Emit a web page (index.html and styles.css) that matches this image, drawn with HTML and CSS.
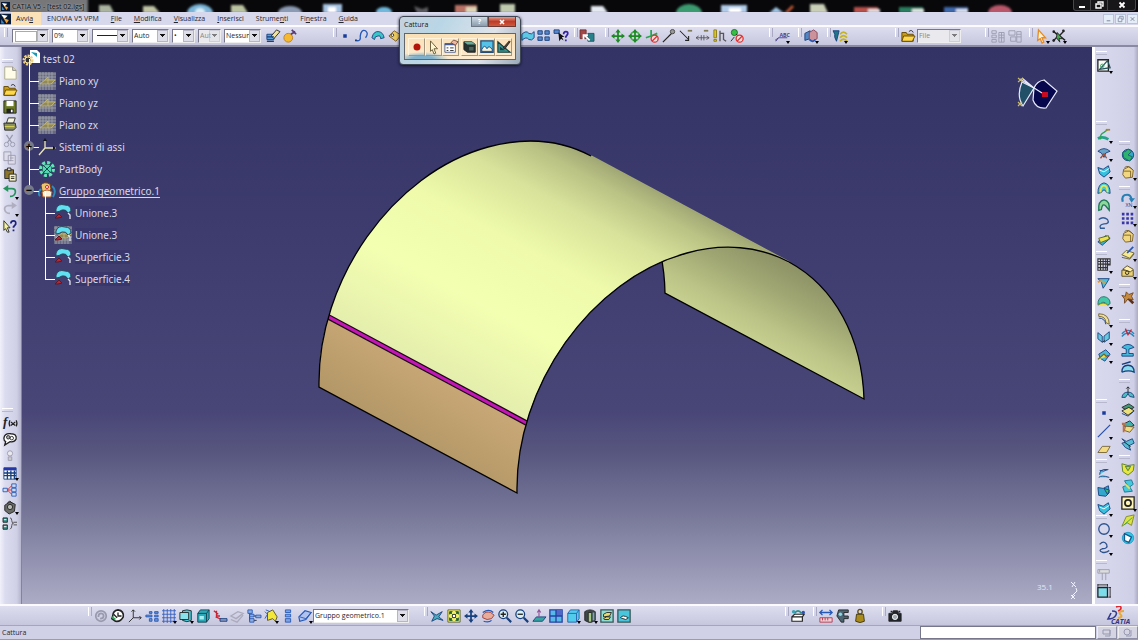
FILE: index.html
```html
<!DOCTYPE html>
<html lang="it">
<head>
<meta charset="utf-8">
<title>CATIA V5 - [test 02.igs]</title>
<link rel="stylesheet" href="styles.css">
</head>
<body>
<div class="app">
  <header class="titlebar">
    <svg class="titlebar-art" viewBox="0 0 1138 12" preserveAspectRatio="none" aria-hidden="true">
      <defs><filter id="soft"><feGaussianBlur stdDeviation="1"/></filter></defs>
      <g filter="url(#soft)">
        <rect x="-6" y="-2" width="94" height="18" fill="#77777a"/>
        <path d="M99 5h11l4 8h-15z" fill="#a9b39f"/><path d="M143 6h11l6 7h-17z" fill="#c0c3a4"/>
        <ellipse cx="200" cy="13" rx="13" ry="9" fill="#79b5d8"/><ellipse cx="200" cy="12" rx="5" ry="4" fill="#d8eef6"/>
        <path d="M231 5h12l5 8h-17z" fill="#b9c3a0"/><ellipse cx="290" cy="13" rx="12" ry="7" fill="#8c9bb4"/>
        <path d="M323 4h19v9h-19z" fill="#a5c3e2"/><path d="M328 7h8v6h-8z" fill="#fff"/>
        <ellipse cx="384" cy="12" rx="8" ry="5" fill="#6fb9dd"/><path d="M414 6l8 3 6-2v6h-11z" fill="#5c5c61"/>
        <path d="M455 5h22v8h-22z" fill="#b87164"/><path d="M466 7h11v6h-11z" fill="#ded5b7"/>
        <path d="M500 4h15v9h-15z" fill="#bdc8ad"/><path d="M591 6h12l5 7h-17z" fill="#e4e9f2"/>
        <ellipse cx="689" cy="13" rx="13" ry="9" fill="#3a9b70"/><path d="M721 5h26v8h-26z" fill="#b0cce8"/><path d="M729 8h12v5h-12z" fill="#fff"/>
        <path d="M769 13l7-6 8 6z" fill="#9dc6e5"/><path d="M784 13l8-8 2 2-6 6z" fill="#b95530"/>
        <path d="M810 4h14l4 9h-18z" fill="#c9ceb7"/><path d="M854 7h24v6h-24z" fill="#b84f48"/><path d="M868 9h12v4h-12z" fill="#e6dcdc"/>
        <path d="M899 7h24v6h-24z" fill="#2c7e61"/><path d="M912 9h12v4h-12z" fill="#dde8e2"/>
        <path d="M944 7h24v6h-24z" fill="#3c67ac"/><path d="M956 9h12v4h-12z" fill="#d8e0ee"/><ellipse cx="1000" cy="13" rx="12" ry="8" fill="#b9566b"/>
      </g>
    </svg>
    <svg class="app-icon" viewBox="0 0 10 10" aria-hidden="true"><use href="#catia-mark"/></svg>
    <h1 class="window-title">CATIA V5 - [test 02.igs]</h1>
    <div class="window-buttons">
      <button aria-label="Riduci a icona"><svg viewBox="0 0 10 8"><path d="M2 6h6" stroke="#fff" stroke-width="2"/></svg></button>
      <button aria-label="Ripristina"><svg viewBox="0 0 10 8"><path d="M4 2V1h5v4H8M2 3h5v4H2z" fill="none" stroke="#fff" stroke-width="1.4"/></svg></button>
      <button class="wide" aria-label="Chiudi"><svg viewBox="0 0 10 8"><path d="M2.500 1.500l5 5M7.500 1.500l-5 5" stroke="#fff" stroke-width="1.800"/></svg></button>
    </div>
  </header>

  <nav class="menubar">
    <svg class="app-icon" viewBox="0 0 10 10" aria-hidden="true"><use href="#catia-mark"/></svg>
    <button class="menu active">Avvi<u>a</u></button>
    <button class="menu">ENOVIA V5 VPM</button>
    <button class="menu"><u>F</u>ile</button>
    <button class="menu"><u>M</u>odifica</button>
    <button class="menu"><u>V</u>isualizza</button>
    <button class="menu"><u>I</u>nserisci</button>
    <button class="menu">Strume<u>n</u>ti</button>
    <button class="menu">Fi<u>n</u>estra</button>
    <button class="menu"><u>G</u>uida</button>
    <div class="document-buttons">
      <button aria-label="Riduci documento"><svg viewBox="0 0 10 8"><path d="M3 6h4" stroke="#777b90"/></svg></button>
      <button aria-label="Ripristina documento"><svg viewBox="0 0 10 8"><path d="M4 2.500V1h4v3.500H7M2.500 3h4v4h-4z" fill="none" stroke="#8a91a8"/></svg></button>
      <button aria-label="Chiudi documento"><svg viewBox="0 0 10 8"><path d="M3 2l4 4M7 2L3 6" stroke="#777b90"/></svg></button>
    </div>
  </nav>

  <div class="toolbar top-toolbar" role="toolbar" aria-label="Strumenti principali">
    <div class="group properties">
      <span class="combo swatch"><select aria-label="Colore"><option></option></select></span>
      <span class="combo"><select aria-label="Trasparenza"><option>0%</option></select></span>
      <span class="combo line"><select aria-label="Tipo di linea"><option></option></select></span>
      <span class="combo"><select aria-label="Spessore"><option>Auto</option></select></span>
      <span class="combo small"><select aria-label="Simbolo punto"><option>•</option></select></span>
      <span class="combo small off"><select aria-label="Rendering" disabled><option>Aut</option></select></span>
      <span class="combo"><select aria-label="Livello"><option>Nessuno</option></select></span>
      <span class="tools" data-tools="painter"></span>
    </div>
    <div class="group" data-tools="sketch"></div>
    <div class="group" data-tools="catalog"></div>
    <div class="group" data-tools="move"></div>
    <div class="group" data-tools="text"></div>
    <div class="group" data-tools="cube"></div>
    <div class="group" data-tools="filter"></div>
    <div class="group">
      <span class="tools" data-tools="folder"></span>
      <span class="combo file off"><select aria-label="Origine" disabled><option>File</option></select></span>
    </div>
    <div class="group" data-tools="tables"></div>
    <div class="group" data-tools="select"></div>
  </div>

  <main class="workspace">
    <div class="side left-side" role="toolbar" aria-label="Standard">
      <div class="group" data-tools="standard"></div>
      <div class="group" data-tools="knowledge"></div>
    </div>

    <section class="viewport" aria-label="Vista 3D">
      <svg class="scene" viewBox="22 47 1070 557" aria-label="Superficie cilindrica">
        <defs>
          <linearGradient id="outer" gradientUnits="userSpaceOnUse" x1="690" y1="209" x2="558" y2="456">
            <stop offset="0" stop-color="#a2a875"/><stop offset=".07" stop-color="#bac284"/><stop offset=".2" stop-color="#d8e29a"/><stop offset=".4" stop-color="#effbab"/><stop offset=".65" stop-color="#f3ffb1"/><stop offset="1" stop-color="#e2ebac"/>
          </linearGradient>
          <linearGradient id="inner" gradientUnits="userSpaceOnUse" x1="800" y1="266" x2="755" y2="350">
            <stop offset="0" stop-color="#8c9065"/><stop offset=".35" stop-color="#a0a773"/><stop offset=".7" stop-color="#bbc386"/><stop offset="1" stop-color="#cad492"/>
          </linearGradient>
          <linearGradient id="sand" gradientUnits="userSpaceOnUse" x1="440" y1="376" x2="400" y2="440">
            <stop offset="0" stop-color="#c7a775"/><stop offset="1" stop-color="#b39766"/>
          </linearGradient>
          <path id="shell" d="M319 387C317 280 393 173 488 147C525 137 561 140 591 156L789 262C759 246 723 243 687 253C591 279 515 386 517 493Z"/>
          <clipPath id="shell-clip"><use href="#shell"/></clipPath>
        </defs>
        <path d="M591 156C637 181 664 232 665 293L864 399C862 338 835 287 789 262Z" fill="url(#inner)"/>
        <path d="M591 156C637 181 664 232 665 293L864 399C862 338 835 287 789 262" fill="none" stroke="#000" stroke-width="1.300"/>
        <use href="#shell" fill="url(#outer)"/>
        <path d="M591 156L789 262" stroke="#a2a875" stroke-width="1.500"/>
        <g clip-path="url(#shell-clip)">
          <path d="M300 303L328 318L527 424L545 433V510H300Z" fill="url(#sand)"/>
          <path d="M310 307L545 433" stroke="#1c0718" stroke-width="5.500"/>
          <path d="M310 307L545 433" stroke="#c217b4" stroke-width="3"/>
        </g>
        <path d="M591 156C561 140 525 137 488 147C393 173 317 280 319 387L517 493C515 386 591 279 687 253C723 243 759 246 789 262" fill="none" stroke="#000" stroke-width="1.300"/>
        <g stroke="#e9ebfa" stroke-width="1.200">
          <path d="M1022 82Q1016 96 1023 106L1034 88Z" fill="#225069"/>
          <path d="M1034 88Q1037 81 1044 80L1057 91L1046 108Q1036 109 1033 100Z" fill="#07074d"/>
          <path d="M1020 79L1042 93M1022 78L1034 88" fill="none"/>
          <path d="M1018 78l5 4m0-4l-5 4M1018 102l4 4m0-4l-4 4" stroke="#c9bb6e"/>
        </g>
        <path d="M1042 92h6v5h-6z" fill="#c90a20"/>
        <path d="M1071 582l5 5m-1-5l-3 5M1076 588l1 3-5 5M1071 595l4 4m0-4l-4 4" fill="none" stroke="#f3f3ff"/>
        <text class="scale" x="1037" y="590">35.1</text>
      </svg>
      <ul class="tree">
        <li class="root"><span class="node"><svg class="part-icon" viewBox="0 0 18 18"><path d="M8 0h7l3 3v10H8z" fill="#fff"/><path d="M9 2l6 5V3z" fill="#179bb5"/><circle cx="6" cy="10" r="4" fill="none" stroke="#f1d27d" stroke-width="3" stroke-dasharray="2 1"/><circle cx="6" cy="10" r="3" fill="#333" stroke="#f6dfa0"/></svg><span class="label">test 02</span></span>
          <ul class="level">
            <li><span class="node" data-icon="plane"><span class="label">Piano xy</span></span></li>
            <li><span class="node" data-icon="plane"><span class="label">Piano yz</span></span></li>
            <li><span class="node" data-icon="plane"><span class="label">Piano zx</span></span></li>
            <li class="plus"><span class="node" data-icon="axes"><span class="label">Sistemi di assi</span></span></li>
            <li><span class="node" data-icon="body"><span class="label">PartBody</span></span></li>
            <li class="minus"><span class="node" data-icon="geoset"><span class="label current">Gruppo geometrico.1</span></span>
              <ul class="level sub">
                <li><span class="node" data-icon="surface"><span class="label">Unione.3</span></span></li>
                <li><span class="node" data-icon="hidden"><span class="label">Unione.3</span></span></li>
                <li><span class="node" data-icon="surface"><span class="label">Superficie.3</span></span></li>
                <li><span class="node" data-icon="surface"><span class="label">Superficie.4</span></span></li>
              </ul>
            </li>
          </ul>
        </li>
      </ul>
    </section>

    <div class="side right-side">
      <div class="column first" role="toolbar" aria-label="Superfici">
        <div class="group" data-tools="sketcher"></div>
        <div class="group" data-tools="surfaces"></div>
        <div class="group" data-tools="operations"></div>
        <div class="group" data-tools="wireframe"></div>
        <div class="group" data-tools="shapes"></div>
        <div class="group" data-tools="curves"></div>
        <div class="group" data-tools="constraints"></div>
      </div>
      <div class="column second" role="toolbar" aria-label="Analisi">
        <div class="group" data-tools="render"></div>
        <div class="group" data-tools="replicate"></div>
        <div class="group" data-tools="wand"></div>
        <div class="group" data-tools="analysis"></div>
        <div class="group" data-tools="advanced"></div>
        <div class="group" data-tools="volumes"></div>
      </div>
    </div>
  </main>

  <div class="toolbar bottom-toolbar" role="toolbar" aria-label="Vista">
    <div class="group inset">
      <span class="tools" data-tools="tools"></span>
      <span class="combo set"><select aria-label="Oggetto di lavoro"><option>Gruppo geometrico.1</option></select></span>
    </div>
    <div class="group" data-tools="view"></div>
    <div class="group" data-tools="update"></div>
    <div class="group" data-tools="measure"></div>
    <div class="group" data-tools="camera"></div>
    <svg class="brand" viewBox="0 0 34 19" role="img" aria-label="DS CATIA">
      <path d="M12 1q5-2 5 1q0 2-3 3" fill="none" stroke="#dc2630" stroke-width="1.600"/>
      <path d="M8 5q6 0 4 4q-2 4-8 4l3-6" fill="none" stroke="#343b8f" stroke-width="1.600"/>
      <path d="M20 5q-6 0-4 3q4 3-2 4" fill="none" stroke="#e6a832" stroke-width="2"/>
      <text class="brand-name" x="7" y="18">CATIA</text>
    </svg>
  </div>

  <footer class="statusbar">
    <span class="status">Cattura</span>
    <input class="command" type="text" aria-label="Comando">
    <button class="status-button" aria-label="Elenco comandi"><svg viewBox="0 0 14 10"><path d="M3 2h7v4H3zm7 0v6H5" fill="none" stroke="#9999b2"/></svg></button>
    <button class="status-button" aria-label="Messaggi"><svg viewBox="0 0 14 10"><circle cx="6" cy="4" r="3" fill="none" stroke="#9999b2"/><path d="M10 2v6H5" fill="none" stroke="#9999b2"/></svg></button>
  </footer>

  <section class="dialog" role="dialog" aria-labelledby="dialog-title">
    <div class="dialog-head">
      <h2 id="dialog-title">Cattura</h2>
      <button class="dialog-help" aria-label="Guida">?</button>
      <button class="dialog-close" aria-label="Chiudi"><svg viewBox="0 0 10 8"><path d="M3 2l4 4M7 2L3 6" stroke="#fff" stroke-width="1.600"/></svg></button>
    </div>
    <div class="dialog-body">
      <div class="tools" data-tools="record"></div>
      <div class="tools" data-tools="album"></div>
    </div>
  </section>
</div>
<svg class="sprite" aria-hidden="true"><symbol id="catia-mark" viewBox="0 0 10 10"><path d="M0 0h10v10H0z" fill="#061a3a"/><path d="M1 1l6 1-3 3z" fill="#fff"/><path d="M3 4l5 2-2 3z" fill="#f3a12d"/><path d="M1 5l3 4H1z" fill="#3789c4"/></symbol></svg>
<script src="app.js"></script>
</body>
</html>
```
FILE: styles.css
```css
* { box-sizing: border-box; }
body { margin: 0; font-family: "Open Sans", "Noto Sans", sans-serif; font-size: 7px; color: #26262e; }
button, select, input { font: inherit; color: inherit; margin: 0; padding: 0; border: 0; border-radius: 0; background: none; }
button { display: grid; place-items: center; }
ul { list-style: none; margin: 0; padding: 0; }
h1, h2 { margin: 0; font-size: 7px; font-weight: 400; }
svg { display: block; }
.sprite { position: absolute; width: 0; height: 0; }

.app { position: relative; display: flex; flex-direction: column; min-height: 100vh; overflow: hidden; background: #d1d1e8; }

.titlebar { position: relative; display: flex; align-items: center; height: 12px; background: #08080a; overflow: hidden; }
.titlebar-art { position: absolute; inset: 0; width: 100%; height: 100%; }
.app-icon { position: relative; width: 9px; height: 9px; margin: 0 2px 0 1px; flex: none; }
.window-title { position: relative; flex: 1; color: #111; text-shadow: 0 0 2px #ccc; }
.window-buttons { position: relative; display: flex; height: 11px; align-self: flex-start; margin-right: 2px; border: 1px solid #46464b; border-top: 0; border-radius: 0 0 3px 3px; background: #17171a; }
.window-buttons button { width: 17px; border-right: 1px solid #46464b; }
.window-buttons .wide { width: 27px; border-right: 0; }
.window-buttons svg { width: 10px; height: 8px; }

.menubar { display: flex; align-items: stretch; height: 13px; background: #d8d8ec; }
.menubar .app-icon { width: 11px; height: 12px; margin: 1px 0 0; }
.menu { display: block; padding: 0 6px; white-space: nowrap; }
.menu.active { padding: 0 8px 0 5px; background: #fae1b8; }
.menu u { text-underline-offset: 1px; }
.document-buttons { display: flex; gap: 1px; margin-left: auto; align-items: center; }
.document-buttons button { width: 11px; height: 10px; border: 1px solid #b7c4dc; background: #e4edf8; }
.document-buttons svg { width: 9px; height: 8px; }

.toolbar { display: grid; height: 22px; border-top: 2px solid #fbfbff; border-bottom: 2px solid #8a8aa2; background: linear-gradient(#dedef0, #c6c6de); }
.top-toolbar { grid-template-columns: 333px 241px 31px 164px 29px 29px 68px 90px 44px 1fr; padding-bottom: 1px; }
.bottom-toolbar { grid-template-columns: 424px 361px 28px 69px 1fr 34px; border-bottom-width: 1px; border-bottom-color: #a5a5bd; }
.bottom-toolbar .inset { padding-left: 92px; }
.group { position: relative; display: flex; align-items: center; padding-left: 4px; }
.group::before { content: ""; position: absolute; left: 0; top: 1px; width: 2px; height: 9px; border-left: 1px solid #fff; border-right: 1px solid #a9a9c3; }
.inset::before { left: 88px; }
.tools { display: flex; }
.tool { position: relative; width: 17px; height: 17px; flex: none; }
.tool svg { width: 14px; height: 14px; overflow: visible; }
.tool.more::after { content: ""; position: absolute; right: 0; bottom: 0; border: 2px solid transparent; border-top: 3px solid #000; border-bottom: 0; }
[data-tools="sketch"] .tool { width: 16px; }
[data-tools="sketch"] { justify-content: space-between; padding-right: 5px; }
.brand { width: 34px; height: 19px; }
.brand-name { font-family: "Open Sans", sans-serif; font-size: 7px; font-style: italic; font-weight: 700; fill: #35357e; }

.properties { gap: 3px; padding-left: 12px; }
.properties::before { left: 4px; }
.combo { position: relative; display: block; flex: none; width: 37px; height: 14px; border: 1px solid #77778c; border-right-color: #eee; border-bottom-color: #eee; background: #fff; }
.combo select { appearance: none; display: block; width: 100%; height: 100%; padding: 0 9px 0 1px; overflow: hidden; }
.combo::after { content: ""; position: absolute; top: 0; bottom: 0; right: 0; width: 9px; background: conic-gradient(from -45deg at 50% 100%, #111 90deg, transparent 0) center / 5px 3px no-repeat, #dedee8; border: 1px solid #b5b5c3; pointer-events: none; }
.combo.small { width: 23px; }
.combo.line::before { content: ""; position: absolute; left: 4px; top: 5px; width: 20px; border-top: 1px solid #222; }
.combo.swatch::before { content: ""; position: absolute; left: 2px; top: 1px; width: 20px; height: 9px; border: 1px solid #aaa; pointer-events: none; }
.combo.off { background: #e9e9ee; color: #888; }
.combo.off select { opacity: 1; }
.combo.off::after { opacity: .5; }
.combo.file { width: 44px; margin-left: 1px; }
.combo.set { width: 96px; }

.workspace { display: grid; grid-template-columns: 22px 1fr 46px; flex: 1; }
.side { background: linear-gradient(90deg, #f1f1fb 0, #dcdcf0 5px, #cfcfe6 80%, #b5b5ce); }
.left-side { display: grid; grid-template-rows: 349px 1fr; padding: 12px 2px 0 1px; border-right: 1px solid #8383a0; }
.side .group { flex-direction: column; align-items: center; padding: 5px 0 0; min-height: 0; }
.side .group::before { left: 1px; top: 0; width: 11px; height: 2px; border: 0; border-top: 1px solid #fff; border-bottom: 1px solid #b7b7cd; }
.right-side .more { height: 18px; }
.right-side { display: grid; grid-template-columns: 23px 20px; padding-top: 4px; border-left: 3px solid #fff; background: linear-gradient(90deg, #d9d9ee, #cfcfe7 90%, #aaaac4); }
.column { display: grid; align-content: start; }
.column.first { grid-template-rows: 70px 130px 148px 60px 56px 45px 38px; padding-right: 5px; }
.column.second { grid-template-rows: 45px 98px 35px 60px 76px 92px; padding-top: 90px; }

.viewport { position: relative; overflow: hidden; background: linear-gradient(#333366 0, #3d3b6e 30%, #484577 65%, #58577f 73%, #7e7e9f 86%, #acacc6 100%); }
.scene { width: 100%; height: 100%; }
.scale { font-size: 8px; fill: #e6e6f3; }
.tree { position: absolute; left: 0; top: 1px; color: #d8d8e6; font-family: "Noto Sans", sans-serif; font-size: 10px; }
.tree li { position: relative; }
.node { display: flex; align-items: center; gap: 3px; height: 22px; }
.node svg { width: 18px; height: 18px; flex: none; }
.label { white-space: nowrap; line-height: 14px; }
.current { text-decoration: underline; text-underline-offset: 2px; }
.level { padding-left: 16px; }
.level > li::before { content: ""; position: absolute; left: -9px; top: -11px; width: 9px; height: 22px; border: solid #fff; border-width: 0 0 1px 1px; }
.sub .label { background: #38366a; }
.level > .plus::after, .level > .minus::after { position: absolute; left: -14px; top: 5px; width: 10px; height: 10px; border-radius: 50%; background: #777a88; color: #000; font-size: 11px; font-weight: 700; line-height: 9px; text-align: center; }
.level > .plus::after { content: "+"; }
.level > .minus::after { content: "−"; }

.statusbar { display: grid; grid-template-columns: 919px 1fr 20px 20px; align-items: stretch; gap: 1px; height: 14px; border-bottom: 1px solid #9a9ab3; background: #d0d0e6; }
.status { padding-left: 2px; line-height: 13px; }
.command { min-width: 0; border: 1px solid #77778c; background: #fff; }
.status-button { border: 1px solid #eee; border-right-color: #8d8da5; border-bottom-color: #8d8da5; background: #d4d4e2; }
.status-button svg { width: 14px; height: 10px; }

.dialog { position: absolute; left: 399px; top: 16px; width: 122px; padding: 0 4px 4px; border: 1px solid #3d4652; border-radius: 4px; background: linear-gradient(120deg, #c6d1dd, #b9d6e6 30%, #dfe3ea 70%, #9ba9b8); box-shadow: 0 1px 3px #14142c; }
.dialog-head { display: flex; align-items: flex-start; height: 16px; }
.dialog-head h2 { flex: 1; padding-top: 3px; line-height: 10px; color: #16161e; }
.dialog-help { width: 17px; height: 10px; border: 1px solid #6c7886; border-top: 0; background: linear-gradient(#cdd8e4, #8d9dac); color: #fff; font-weight: 700; line-height: 9px; }
.dialog-close { width: 28px; height: 10px; border: 1px solid #6c3a34; border-top: 0; background: linear-gradient(#e29c8d, #be3c29 50%, #cf5a3b); }
.dialog-close svg { width: 10px; height: 8px; }
.dialog-body { display: flex; gap: 2px; height: 27px; padding: 4px 3px; border: 1px solid #62656a; background: radial-gradient(ellipse at 16% 100%, #7fb1cc 0 8%, transparent 20%), linear-gradient(#f9dfb5, #fdebcf); }
.dialog .tool { height: 18px; border: 1px solid #fff3dc; border-right-color: #a3977e; border-bottom-color: #a3977e; }
```
FILE: app.js
```js
const C = '#5cc8e4', N = '#153f7d', Y = '#eee253', G = '#28a653', K = '#222', B = '#2458b8', R = '#c82330', W = '#fff', S = '#9a9aae';
const p = (d, fill = 'none', stroke = 'none', w = 1) => `<path d="${d}" fill="${fill}" stroke="${stroke}" stroke-width="${w}"/>`;
const c = (x, y, r, fill = 'none', stroke = 'none', w = 1) => `<circle cx="${x}" cy="${y}" r="${r}" fill="${fill}" stroke="${stroke}" stroke-width="${w}"/>`;
const fourArrows = (col) => p('M8 2v12M2 8h12', 'none', col, 2) + p('M8 0l3 4H5zM8 16l3-4H5zM0 8l4-3v6zM16 8l-4-3v6z', col);
const forbid = c(11, 11, 4, '#f5dede', '#d33', 1.5) + p('M8 14l6-6', 'none', '#d33', 1.5);
const sheet = 'M1 6q5-5 8-1 3 2 6-2v7q-3 4-6 2-3-4-8 1z';
const box = (f, s) => p('M2 5l3-4h10v10l-3 4H2z', f, s) + p('M2 5h10v10M12 5l3-4', 'none', s);

const icons = {
  brush: p('M1 6h10l-2 6H1z', '#5b9fd7', N) + p('M6 8l6-7 4 2-7 8z', '#efe29b', K) + p('M1 9h8M1 14h8', 'none', N, 1.500),
  wand: c(6, 10, 5, '#f4b931', '#bd7a20') + p('M9 6l5-3M10 1l5 5', 'none', '#593c72', 2),
  dot: p('M6 6h4v4H6z', '#193c9b'),
  spline: p('M1 13q6 2 5-5 1-8 6-6 4 3 0 8', 'none', B, 1.500) + p('M0 12h2v2H0z', N),
  dome: p('M1 10Q3 2 9 3q5 1 6 7l-4 1q0-4-3-3-4 0-4 4z', '#36c6c8', N),
  tag: p('M1 8l6-6 8 5-6 7z', '#e8c85c', '#73541a') + c(5, 7, 1.500, W, K),
  sheetIcon: p(sheet, C, N),
  grid4: p('M1 2h5v4H1zM9 2h5v4H9zM1 9h5v4H1zM9 9h5v4H9z', '#5a88cb', N),
  whatbox: p('M0 1h6v4H0z', '#5a88cb', N) + p('M5 4l1 10 2-3 3 2-2-4h3z', '#111') + p('M11 6q0-3 2.500-3 3 0 2 3l-2 3v1m0 2v2', 'none', '#3425a5', 2),
  catalog: p('M0 1h7v10H0z', '#a44747', '#6b3434') + p('M9 5h7v9H9z', '#27808a', '#245058') + p('M5 7l6 6M4 12V7h5', 'none', W, 2),
  move: fourArrows('#1d8a24'),
  moveRound: c(8, 8, 5, 'none', '#4fb751', 2) + fourArrows('#1d8a24'),
  axisNo: p('M7 1v7l7-3M7 8l-6 2', 'none', G, 2) + forbid,
  pin: p('M1 15L12 4', 'none', K, 1.300) + c(12, 3, 2.500, '#999', '#444'),
  diag: p('M1 2l10 10M11 8v5H7', 'none', K, 1.200) + p('M10 1h5v2h-5z', '#7f7c55'),
  stretch: p('M0 10h15M3 8L0 10l3 2M12 8l3 2-3 2M6 7v6M9 7v6', 'none', '#555') + p('M9 1h5v2H9z', '#7f7c55'),
  snap: p('M1 1h3v9H1zM1 12h3v2H1z', '#d8c72c', '#8c7a11') + p('M8 2v12M8 5h4v7l3 2', 'none', '#555', 1.500),
  handNo: c(5, 4, 3.500, '#36bf45', '#1a6a25') + p('M7 6l4 3M1 14l4-5', 'none', K) + forbid,
  abc: '<text x="5" y="9" font-size="6" font-weight="700" fill="#4b4189">ABC</text>' + p('M0 13l4-3h10M1 14l3-4', 'none', '#4b4189'),
  cubes: p('M1 5l6-3v9l-6 2z', '#4f86c4', N) + p('M6 4l5-3 4 3v7l-5 3-4-3z', '#cc929c', '#854254') + p('M6 12q4 4 7 0', 'none', B, 2),
  filter: p('M0 2h7L4 14q-3-5-2-8z', '#1f7788', N) + p('M8 6q4-5 8 0M8 10q4-5 8 0M8 14q4-5 8 0', 'none', '#c6b21c', 2),
  folder: p('M1 14V4h5l1 2h7v8z', '#c99c17', '#5d4404') + p('M3 8h13l-3 6H1z', '#ffd84a', '#5d4404') + p('M9 3q3-3 5 1', 'none', K),
  tableA: p('M1 2h5v3H1zM1 7h5v3H1zM1 12h5v3H1zM9 4h6v11H9zM9 7h6M9 10h6M12 4v11', 'none', S),
  tableB: p('M1 2h7v5H1zM3 9h6v5H3zM10 3h5v12h-5zM10 6h5M10 9h5', 'none', S),
  arrow: p('M4 1l8 9H8l2 5-2 1-2-5-3 2z', '#fff2d8', '#e58b21', 1.500),
  pointers: p('M1 14l6-6M2 3l6 5 6-6M9 8l6 5', 'none', K, 1.500) + p('M6 4l6 7H8l1 4-4-5z', '#46a84c', K) + c(2, 3, 1.500, K) + c(13, 2, 1.500, K) + c(2, 13, 1.500, K),
  newDoc: p('M2 1h9l4 4v10H2z', '#fffde8', '#aaa887') + p('M11 1v4h4', '#d8d6b4', '#888'),
  save: p('M1 1h14v14H1z', '#6c7b23', '#222') + p('M4 1h8v6H4z', W) + p('M4 10h8v5H4z', '#222') + p('M9 11h2v3H9z', W),
  print: p('M4 7l2-6h8l-2 6z', '#f5f4dc', K) + p('M1 7h13l1 5-3 3H2z', '#8a915e', K) + p('M2 11h11', 'none', Y),
  cut: p('M4 1l6 9M11 1L5 10', 'none', S, 1.500) + c(4, 12, 2.500, 'none', S) + c(11, 12, 2.500, 'none', S),
  copy: p('M1 1h8v10H1zM6 5h8v10H6zM8 8h4M8 11h4', '#dcdcea', S),
  paste: p('M2 2h10v10H2z', '#8d762a', K) + p('M5 0h4v3H5z', '#ddd', K) + p('M7 7h8v8H7z', '#f7f3c7', K) + p('M9 10h4M9 12h4', 'none', K),
  undo: p('M3 4h7q5 0 4 5-1 4-6 4', 'none', '#26935c', 2) + p('M0 4l6-4v8z', '#26935c'),
  redo: p('M12 4H6Q1 5 2 9q1 4 6 4', 'none', '#aeaebf', 2) + p('M16 4l-6-4v8z', '#aeaebf'),
  what: p('M1 2l7 8H5l2 5-2 0-2-4-2 2z', '#f6f4a4', K) + p('M9 5q0-3 3-3t2.500 4l-2.500 3v1m0 2v2', 'none', '#1d237b', 2),
  fx: '<text x="0" y="12" font-size="15" font-style="italic" font-weight="700" font-family="Liberation Serif" fill="#222">f</text>' + p('M8 6q-2 4 0 7M15 6q2 4 0 7M9 8l5 4M9 12l5-4', 'none', K, 1.300),
  bubble: p('M1 7q1-6 8-5 7 0 6 6-2 4-7 3l-6 4 1-4Q1 10 1 7z', W, K, 1.500) + c(6, 6, 2, '#aaa', K) + c(10, 7, 2, 'none', K),
  light: c(8, 5, 3, '#e8e8ee', S) + p('M6 9h4v4H6z', '#ccc', S),
  calendar: p('M1 2h14v13H1z', W, N) + p('M1 2h14v3H1z', '#2436a8') + p('M1 8h14M1 11h14M5 5v10M9 5v10M13 5v10', 'none', N, 1.500),
  nodes: p('M5 8l5-5M5 8h5M5 8l5 5', 'none', R) + p('M0 6h5v4H0zM10 1h5v4h-5zM10 6h5v4h-5zM10 11h5v4h-5z', '#cfdcf4', B),
  lock: p('M2 6l6-4 6 3-1 8-6 3-5-4z', '#686b68', K) + c(8, 8, 3, '#b8bbb5', K) + p('M5 4q2-5 6 0', 'none', K),
  braces: p('M0 1h5v5H0zM0 9h5v5H0z', '#32918a', K) + p('M1 3h3M1 11h3', 'none', W) + p('M8 1q2 0 2 3t2 3q-2 0-2 3t-2 4M12 6h4M12 9h4', 'none', '#444'),
  plane: p('M0 0h18v18H0z', '#666a80') + p('M0 2h18M0 5h18M0 8h18M0 11h18M0 14h18M2 0v18M5 0v18M8 0v18M11 0v18M14 0v18', 'none', '#a4a6ae', .8) + p('M2 12l5-4h10l-4 4zM7 8l3-3v7', '#8f895b', '#c8bb78', .8),
  axes: p('M7 1v9h11M7 10L1 17', 'none', '#ebe6b5', 1.300) + p('M5 3l2-3 2 3zM15 8l3 2-3 2z', '#111'),
  body: c(9, 9, 5, '#53d7b0', '#153b43') + c(9, 9, 6.500, 'none', '#64e3b9', 3).replace('/>', ' stroke-dasharray="3 2"/>') + p('M5 5l8 8M13 5l-8 8', 'none', '#174e52'),
  geoset: p('M3 3q3-4 9-1l1 5-3 4-6-2z', '#edc46f', '#74401a') + p('M4 10q5-4 10 0l-1 5H5z', '#f5f0dc', '#b05a25') + p('M14 4q5 4 1 11M2 14q-3-3 1-7', 'none', '#318bb4', 2) + c(9, 5, 1.500, W, R),
  surface: p('M2 5Q4-1 11 1q6 0 6 6l-3 2q-2-4-6-3-3 2-6 2z', '#62dff0', '#28485e') + p('M14 9l2 2v4', 'none', '#e3e6ee', 1.300) + p('M1 14l4-4 3 3-4 1z', '#b12935', '#631623'),
  sketch: p('M1 2h12v13H1z', '#f7faf7', K, 1.500) + p('M3 13l9-10 3 8z', 'none', '#25535f', 1.500) + c(6, 9, 2, 'none', G),
  extrude: p('M1 12q6-3 12 1', 'none', '#23a38a', 3) + p('M4 13q-1-6 4-8l4-3', 'none', G, 1.500) + p('M10 1h5v2h-5z', '#b18330'),
  patch: p('M1 6q7-6 14 0l-5 2-2 5-3-5z', '#69a4c8', N) + p('M4 14l4-5 3 5', 'none', '#a94b2a', 1.500),
  cyan: p('M1 4l6 2 6-4 2 7-7 6-5-4z', '#37c1df', N) + p('M3 7l5 2 6-4', 'none', W),
  loft: p('M1 13q0-11 7-12 7 1 7 12l-4-1q-3-6-6 0z', '#43d1d0', N) + p('M4 12q0-8 4-8 4 0 4 8', 'none', Y, 2),
  arch: p('M2 13Q1 2 8 1q7 1 6 12l-4-5q-4-4-5 4z', '#8fd79b', '#1f7855', 1.500),
  loop: p('M2 4q5-4 10 0 3 5-4 5-6 1-4 5h5', 'none', '#315b94', 1.500),
  layers: p('M1 10l9-7 5 3-9 8z', '#35b3dc', N) + p('M2 6l11-3 1 4-10 4z', Y, '#536417'),
  mesh: p('M1 1h11v13H1zM1 4h14M1 7h14M1 11h11M4 1v13M7 1v13M10 1v13M12 1h3v7h-3', 'none', '#333', 1.200),
  trim: p('M1 3h13l-3 5-4 6-2-7z', '#48c1dd', N) + p('M1 7q5-3 8 2', 'none', '#eb9830', 2),
  cap: p('M1 12Q1 3 8 3q7 1 7 8l-3 2q-4-6-8-2z', '#44c8a7', '#1b7067') + p('M1 13q6-5 12 0', Y, '#8b8424'),
  fillet: p('M2 2q12 0 12 12l-4-2q0-7-8-7z', '#ecdf9b', '#705e2c') + p('M2 7q7 0 8 7', 'none', N),
  wings: p('M1 3l5 4v7L1 10zM14 2L8 7v7l6-4z', '#66c9de', N) + p('M6 14l3-2', 'none', K),
  shift: p('M2 7l8-5 5 5-6 8-5-3z', '#4cb8d6', N) + p('M1 13l7-6 3 3', Y, '#70691d', 1.500) + p('M11 9h3', 'none', R, 1.500),
  line: p('M1 15L15 1', 'none', '#294faa', 1.500),
  para: p('M1 12l5-7h9l-4 7z', '#f3d980', '#716235'),
  offset: p('M2 13q3-3 12 0M3 10q0-7 9-6M3 5q4 2 10-1', C, N),
  blob: p('M1 4l6 1 6-3 1 8-4 4-8-1z', '#32a8cd', N) + p('M8 5l6 2-2 5z', '#46b964', N),
  circle: c(8, 8, 6, 'none', '#2d538f', 1.500),
  swirl: p('M3 5q5-5 8 0 2 5-5 5-5 2 0 4 5 1 8-2', 'none', '#2d538f', 1.500),
  ruler: p('M1 3h13v4H1zM6 7v8M10 7v8M3 3v3', '#ddd', S),
  dim: p('M1 4h11v11H1z', '#7cdcea', K, 1.500) + p('M1 1h11M15 4v11M1 0v3M12 0v3M13 4h3M13 15h3', 'none', K),
  globe: c(8, 8, 6.500, '#32a8c8', N) + p('M2 5q5-1 6-4l4 3-4 4 5 2-3 5-7-4z', '#2cb46f', '#19606c'),
  gold: p('M3 5l6-3 5 4-1 8-8 1-3-4z', '#f2d780', '#725a24') + p('M4 3q4-4 10 3M3 7h8v7', 'none', '#725a24'),
  rotate: p('M2 10Q0 2 7 2q4 0 5 5', 'none', '#287fb4', 2.500) + p('M9 6h7l-4 5z', '#287fb4') + '<text x="5" y="16" font-size="6" fill="#3c3684">XN</text>',
  dots: p('M1 2h3v3H1zM6 2h3v3H6zM11 2h3v3h-3zM1 7h3v3H1zM6 7h3v3H6zM11 7h3v3h-3zM1 12h3v3H1zM6 12h3v3H6zM11 12h3v3h-3z', '#3836a6'),
  sheets: p('M1 10l5-5 9 3-5 6z', '#f8e98d', '#625a28') + p('M1 13l9 2 5-6', 'none', '#625a28') + p('M7 8l7-7', 'none', B, 2),
  openBox: p('M1 7h13v7H1z', '#ead176', '#544519') + p('M2 6l5-4 7 4-3 3z', '#fff0ae', '#544519') + c(7, 10, 2, 'none', K),
  magic: p('M6 6l8 8', 'none', '#5c2f16', 3) + p('M1 5l4 1 1-5 3 3 5-2-2 4 2 4-6-1-4 5 0-5z', '#c78b3d', '#704521'),
  curveMap: p('M1 9q7-8 14 0M1 12q7-8 14 0', 'none', '#2a86bc', 1.500) + p('M5 3l3 7 4-6', 'none', R, 1.500),
  umbrella: p('M1 5q7-7 14 0l-6 2v5h5v3H1v-3h5V7z', '#43badb', N),
  bowl: p('M1 14q0-8 7-8t7 8q-6-3-14 0M1 5l10-3', '#88dbea', N, 1.500),
  arrowed: p('M1 13q1-6 7-6t7 6l-5-1-2-3-3 4z', '#4dbec1', N) + p('M8 1v8M6 3l2-2 2 2', 'none', K),
  stack: p('M1 5l8-4 6 4-7 4z', '#3f9a76', K) + p('M1 9l8-4 6 4-7 5z', '#ede07a', K) + p('M1 12l7 3 6-5', 'none', N),
  stackB: p('M2 5l8-4 5 5-8 4z', '#3eb0ad', K) + p('M5 7l10 1-5 6-6-2z', '#f3db7d', '#69572d') + p('M1 3h5v2H4v9H2V5H1z', '#cf6b30'),
  twist: p('M1 2l5 3 7-3 2 5-6 3 2 5-6-3-4-5 4-1z', '#58bdd3', N) + p('M4 6l7 5', 'none', K),
  triangle: p('M1 2l7 2 7-1-1 7-6 5-6-4z', '#e9e63e', '#567a28') + p('M5 5h6l-3 5z', '#b9d843', '#3f7344'),
  ribbon: p('M4 2l8-1 2 5-4 3 3 5-9 1-2-6 5-2z', '#43cae1', '#18728d') + p('M5 6l5 5', 'none', Y, 2),
  target: p('M1 1h14v14H1z', '#fff6b5', K, 1.500) + c(8, 8, 3.500, 'none', K, 2),
  yellowPatch: p('M1 14l5-11 9-2-3 12-5-3z', '#dfe243', '#788721') + p('M4 12L13 4', 'none', G),
  flower: c(8, 8, 6.500, '#2dc7e8', '#219bc2') + p('M4 3l8 4-3 6-5-2z', W, '#0f5c91', 1.500),
  spiral: c(8, 8, 6, 'none', S, 2) + p('M5 9q0-4 3-4t3 3-4 3', 'none', S, 2),
  clock: p('M2 8q0-6 6-7 7 1 6 8-3 6-9 5l-4-3z', W, K, 1.800) + p('M8 4v4h4M3 6l4 4', 'none', K, 1.500) + p('M1 9l4 3', 'none', G, 2),
  axis3: p('M6 1v9h9M6 10l-5 5M4 3l2-2 2 2M13 8l2 2-2 2', 'none', K),
  levels: p('M5 3h3v2H5zM11 3h4v2h-4zM1 7h7v2H1zM11 7h4v2h-4zM5 11h3v3H5zM11 11h4v3h-4z', '#6a94d5', B),
  grid: p('M0 2h16M0 6h16M0 10h16M0 14h16M2 0v16M6 0v16M10 0v16M14 0v16', 'none', '#335fc0'),
  tube: p('M4 2q5-2 10 0v11q-5 3-10 0z', '#47cbdc', K) + p('M1 4h10v8H1z', '#89e1eb', K),
  cubeT: box('#2aaab8', '#163c4b') + p('M4 8h5v4H4z', '#a5edf0'),
  plug: p('M1 2l5 4M4 2v6h4M3 9l7 3', 'none', R, 1.500) + p('M8 11h8v3H8z', '#8e97bf', N),
  greyBook: p('M1 8l8-5 6 2-8 6zM1 12l7 3 7-8', 'none', '#aaaaba', 1.500),
  hierarchy: p('M3 3v10h8M3 8h8', 'none', K) + p('M1 1h5v4H1zM3 6h5v3H3zM10 7h6v3h-6zM3 11h5v4H3z', '#8eaee2', B),
  yellowShape: p('M4 4l6-3 5 8-2 5-3-3-6 2z', '#f3e83a', '#504c25') + p('M1 3l3 3-3 5M2 1l5 2', 'none', B),
  column: p('M5 1h6v3H5zM5 6h6v3H5zM5 11h6v4H5z', '#7fa3e0', B),
  prism: p('M1 9l7-7 7 2-6 8-7 2z', '#b0c3ef', B, 1.300) + p('M2 9l7 2 6-7', 'none', B),
  fly: p('M1 3l6 4 7-4-4 6 5 4-7-2-6 3 3-6z', '#46aebb', N),
  fit: p('M1 1h14v14H1z', '#f0ef67', '#606331') + p('M3 3h3L3 6zM13 3h-3l3 3zM3 13h3l-3-3zM13 13h-3l3-3z', '#1c5b32', '#1c5b32') + p('M4 4l8 8M12 4l-8 8', 'none', '#1c5b32') + c(8, 8, 2, W, K),
  pan: fourArrows('#17427f'),
  orbit: p('M2 7q3-5 9-3l4 3-3 4-5 1-5-2z', '#e8ad9a', '#9b3833') + p('M2 4q7-5 12 0M3 14q6 2 9-1', 'none', B, 1.500),
  zoomIn: c(6, 6, 5, '#d9eff4', N, 1.500) + p('M10 10l5 5', 'none', N, 2.500) + p('M3 6h6M6 3v6', 'none', K, 1.500),
  zoomOut: c(6, 6, 5, '#d9eff4', N, 1.500) + p('M10 10l5 5', 'none', N, 2.500) + p('M3 6h6', 'none', K, 1.500),
  normal: p('M1 14l4-5h11l-4 5z', '#35a7a0', N) + p('M8 10V2M6 4l2-3 2 3', 'none', '#93569a', 1.300),
  quad: p('M1 1h14v14H1z', '#56b9e8', '#2441a3', 1.500) + p('M8 1h7v7H8z', '#5067c8') + p('M8 1v14M1 8h14', 'none', '#2441a3', 1.500),
  cube: box('#52ccec', '#275ba8'),
  shade: p('M2 3q6-4 12 0v10q-6 4-12 0z', '#3c4a4b', K) + p('M6 4h4v11H6z', '#a5c987', K) + p('M11 4h2v9h-2z', '#7aa5b4'),
  hide: p('M1 1h14v14H1z', '#8eddd7', '#3a5757', 1.500) + p('M4 6q3-3 9-2l-2 4-7 1zM4 11q3-3 8-2l-2 3H5z', '#e6db6d', K),
  swap: p('M1 1h14v14H1z', '#48c6dd', '#3a5757', 1.500) + p('M4 10q2-4 9 0l-3 2z', W, K),
  refresh: p('M4 5q4-6 8 0', 'none', '#258f86', 2) + p('M1 9h12v5H1zM1 9l3-3h11l-2 3', W, K, 1.300) + c(3, 3, 2, '#38a3b3') + c(14, 4, 2, '#2d52b1'),
  measure: p('M1 4h14M4 1L1 4l3 3M12 1l3 3-3 3', 'none', B, 1.500) + p('M1 10h14v5H1z', '#f3cfd5', '#b4344a') + p('M4 10v3M7 10v3M10 10v3', 'none', '#b4344a'),
  caliper: p('M3 1h11v3H9v4h5v3H9v4H6l-5-7z', '#4b6572', K) + c(5, 6, 2, '#8fd5dd'),
  weight: p('M4 6h8l1 8q-5 3-10 0z', '#aa8a1b', '#3e3308') + c(8, 3, 2.500, 'none', '#5d4c12', 1.500),
  camera: p('M1 5h4l1-3h5l1 3h3v9H1z', '#20242a', K) + c(8, 9, 3, '#a6adb6', W) + p('M3 3h2M12 3h2', 'none', K, 2),
  record: c(8, 8, 4, '#b3150b'),
  pointer: p('M4 1l8 9H8l2 5-2 1-2-5-2 2z', '#fff7cf', '#5e522f'),
  options: p('M1 4h12v10H1z', W, '#445a8f') + p('M1 4h12v2H1z', '#445a8f') + p('M3 9h2M3 12h2M7 9h4M7 12h4', 'none', K) + p('M8 3l3-3 5 2-3 4z', '#ecb8a0', '#74453a'),
  albumCube: p('M1 2h9l4 3v9H5l-4-3z', '#25312e', K) + p('M1 2h9l4 3H5z', '#6aaa98') + p('M7 8h5v4H7z', '#50645e'),
  photo: p('M1 1h14v13H1z', '#55c3e7', '#254c75', 1.500) + p('M2 11q3-7 6-1 2-5 6 1v2H2z', '#f6f2d7', N),
  edit: p('M1 2v12h14zM4 9v2h3z', '#379590', '#173d3d', 1.300) + p('M7 9l7-8 1 1-6 8z', '#55432c', K)
};
icons.hidden = icons.plane + icons.surface;

// Each entry is "icon|label"; a trailing * adds the drop-down marker.
const toolbars = {
  painter: 'brush|Copia formato,wand|Procedura guidata',
  sketch: 'dot|Punto,spline|Curva,dome|Cupola,tag|Etichetta,line|Linea,circle|Cerchio,spline|Spline,para|Piano,cyan|Foglio,layers|Strati,loft|Loft,sheetIcon|Superficie,grid4|Finestre,whatbox|Che cosa',
  catalog: 'catalog|Catalogo',
  move: 'move|Sposta,moveRound|Ruota,axisNo|Blocca asse,pin|Fissa,diag|Direzione,stretch|Estendi,snap|Aggancia,handNo|Disattiva',
  text: 'abc|Testo*', cube: 'cubes|Solidi*', filter: 'filter|Filtro*', folder: 'folder|Apri catalogo',
  tables: 'tableA|Tabella,tableB|Famiglia', select: 'arrow|Selezione*,pointers|Selezione multipla*',
  standard: 'newDoc|Nuovo,folder|Apri,save|Salva,print|Stampa,cut|Taglia,copy|Copia,paste|Incolla,undo|Annulla*,redo|Ripeti*,what|Guida rapida',
  knowledge: 'fx|Formula,bubble|Commento,light|Controllo,calendar|Tabella di progettazione*,nodes|Relazioni,lock|Blocca*,braces|Equazioni',
  sketcher: 'sketch|Schizzo*',
  surfaces: 'extrude|Estrusione*,patch|Scostamento*,cyan|Sweep*,loft|Sezioni,arch|Riempimento,loop|Raccordo,layers|Strati',
  operations: 'mesh|Griglia*,trim|Rifinisci*,cap|Contorno*,fillet|Arrotonda*,wings|Simmetria*,shift|Estrapola*',
  wireframe: 'dot|Punto*,line|Linea*,para|Piano*', shapes: 'offset|Offset*,blob|Proiezione,cyan|Intersezione*',
  curves: 'circle|Cerchio*,swirl|Spline*', constraints: 'ruler|Vincolo,dim|Quota',
  render: 'globe|Ambiente,gold|Materiale*', replicate: 'rotate|Ripetizione*,dots|Serie*,gold|Duplica,sheets|Incolla superficie*,openBox|Corpo*',
  wand: 'magic|Assistente', analysis: 'curveMap|Curvatura,umbrella|Sformo,bowl|Connessione',
  advanced: 'arrowed|Deforma,stack|Sviluppa,stackB|Trasferisci,twist|Torsione',
  volumes: 'triangle|Volume,ribbon|Nastro,target|Foro*,yellowPatch|Sagoma,flower|Fiore',
  tools: 'spiral|Aggiorna,clock|Aggiornamento manuale,axis3|Sistema di assi,levels|Livelli,grid|Griglia*,tube|Corpo*,cubeT|Solido,plug|Connetti,greyBook|Cronologia,hierarchy|Struttura,yellowShape|Seleziona forma*,column|Colonna,prism|Prisma*',
  view: 'fly|Volo,fit|Adatta tutto,pan|Panoramica,orbit|Ruota vista,zoomIn|Ingrandisci,zoomOut|Riduci,normal|Vista normale,quad|Viste multiple,cube|Isometrica*,shade|Ombreggiatura*,hide|Nascondi,swap|Scambia spazio',
  update: 'refresh|Aggiorna vista', measure: 'measure|Misura,caliper|Calibro,weight|Inerzia', camera: 'camera|Cattura immagine',
  record: 'record|Registra,pointer|Seleziona,options|Opzioni', album: 'albumCube|Album,photo|Immagine,edit|Modifica'
};

for (const host of document.querySelectorAll('[data-tools]')) {
  for (const entry of toolbars[host.dataset.tools].split(',')) {
    const [name, label] = entry.split('|');
    const button = document.createElement('button');
    button.className = label.endsWith('*') ? 'tool more' : 'tool';
    button.setAttribute('aria-label', label.replace('*', ''));
    button.innerHTML = `<svg viewBox="0 0 16 16">${icons[name]}</svg>`;
    host.append(button);
  }
}
for (const node of document.querySelectorAll('[data-icon]')) {
  node.insertAdjacentHTML('afterbegin', `<svg viewBox="0 0 18 18">${icons[node.dataset.icon]}</svg>`);
}
```
